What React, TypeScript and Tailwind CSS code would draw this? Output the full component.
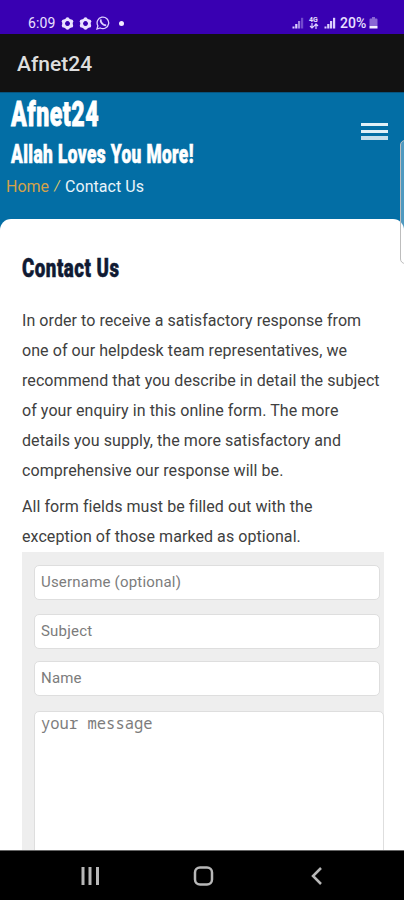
import type { ReactNode } from "react";

const INTRO_LINES = [
  "In order to receive a satisfactory response from",
  "one of our helpdesk team representatives, we",
  "recommend that you describe in detail the subject",
  "of your enquiry in this online form. The more",
  "details you supply, the more satisfactory and",
  "comprehensive our response will be.",
];

const NOTE_LINES = [
  "All form fields must be filled out with the",
  "exception of those marked as optional.",
];

function Flower() {
  return (
    <svg width="13" height="13" viewBox="0 0 13 13" className="shrink-0">
      <circle cx="6.5" cy="6.5" r="3.9" fill="none" stroke="#e9e0ff" strokeWidth="2.8" />
      <g fill="#e9e0ff">
        <circle cx="6.5" cy="2.200" r="1.9" />
        <circle cx="10.3" cy="4.3" r="1.9" />
        <circle cx="10.3" cy="8.7" r="1.9" />
        <circle cx="6.5" cy="10.8" r="1.9" />
        <circle cx="2.7" cy="8.7" r="1.9" />
        <circle cx="2.7" cy="4.3" r="1.9" />
      </g>
    </svg>
  );
}

function WhatsApp() {
  return (
    <svg width="14" height="14" viewBox="0 0 14 14" fill="none" stroke="#ddd0ff" className="shrink-0">
      <path d="M1 13l.9-3.2A5.8 5.8 0 1 1 4.2 12z" strokeWidth="1.3" />
      <path d="M4.8 4.2c-.8 1.6 2.4 5.2 4.6 5" strokeWidth="1.9" strokeLinecap="round" />
    </svg>
  );
}

function Signal({ weak = false }: { weak?: boolean }) {
  return (
    <svg width="12" height="12" viewBox="0 0 12 12" fill="#ddd0ff" className="shrink-0">
      <rect x="0.5" y="9.5" width="2" height="2" />
      <rect x="3.2" y="7" width="2.2" height="4.5" />
      <rect x="6" y="4" width="2.2" height="7.5" opacity={weak ? 0.65 : 1} />
      <rect x="9" y="0.8" width="2.2" height="10.7" opacity={weak ? 0.35 : 1} />
    </svg>
  );
}

function StatusBar() {
  return (
    <div className="flex h-[34px] shrink-0 items-center bg-[#3900b2] pt-[12px] pl-[28px] text-[14px] text-[#e9e0ff]">
      <span className="w-[33px] tracking-[0.1px]">6:09</span>
      <div className="flex items-center gap-[4.5px]">
        <Flower />
        <Flower />
        <WhatsApp />
      </div>
      <span className="ml-[9px] size-[5px] rounded-full bg-[#f3edff]" />
      <div className="ml-auto flex items-center pr-[26px]">
        <Signal weak />
        <div className="ml-[4px] flex w-[11px] flex-col items-center">
          <span className="text-[7px] leading-[6px] font-bold">4G</span>
          <svg width="10" height="6" viewBox="0 0 10 6" stroke="#ddd0ff" strokeWidth="1.2" fill="none">
            <path d="M3 0v5M1 3l2 2 2-2M7 6V1M5.3 3l1.700-2 2 2" />
          </svg>
        </div>
        <div className="ml-[5px]">
          <Signal />
        </div>
        <span className="ml-[4px] w-[29px] font-medium">20%</span>
        <svg width="9" height="12" viewBox="0 0 9 12">
          <path d="M3 0h3v1.500h1.500q1 0 1 1V9H.5V2.500q0-1 1-1H3z" fill="#8a66d4" />
          <rect x="0.5" y="9" width="8" height="2.500" fill="#f3edff" />
        </svg>
      </div>
    </div>
  );
}

function Field({ placeholder, className = "" }: { placeholder: string; className?: string }) {
  return (
    <input
      placeholder={placeholder}
      className={`block h-[35px] w-[346px] rounded-[5px] border border-[#dedede] bg-white px-[6px] pb-[2px] text-[15px] tracking-[0.2px] text-[#333] outline-none placeholder:text-[#7c7c7c] ${className}`}
    />
  );
}

// Tall narrow headings, squeezed horizontally from the heaviest weight
function Condensed({ children, className }: { children: ReactNode; className: string }) {
  return (
    <span className={`block w-max origin-left font-black whitespace-nowrap ${className}`}>{children}</span>
  );
}

function Lines({ lines, className }: { lines: string[]; className: string }) {
  return (
    <p className={`text-[16px] leading-[30px] tracking-[0.07px] whitespace-nowrap text-[#404040] ${className}`}>
      {lines.map((line) => (
        <span key={line} className="block">
          {line}
        </span>
      ))}
    </p>
  );
}

export default function App() {
  return (
    <div className="flex h-[900px] w-[404px] flex-col overflow-hidden bg-white font-['Roboto',sans-serif]">
      <StatusBar />
      <div className="flex h-[58px] shrink-0 items-center bg-[#121212] pt-[3px] pl-[17px] text-[21px] font-medium text-[#dedede]">
        Afnet24
      </div>

      <div className="relative flex min-h-0 flex-1 flex-col bg-[#036ea5]">
        <header className="h-[127px] shrink-0 border-t border-[#07547e]">
          <div className="flex justify-between pr-[16px] pl-[11px]">
            <div>
              <h1>
                <Condensed className="h-[42px] scale-x-[0.66] text-[35px] leading-[43px] tracking-[0.8px] text-white [-webkit-text-stroke:0.8px_#fff]">
                  Afnet24
                </Condensed>
              </h1>
              <h2>
                <Condensed className="h-[38px] scale-x-[0.665] text-[26px] leading-[39px] tracking-[0.6px] text-white [-webkit-text-stroke:0.6px_#fff]">
                  Allah Loves You More!
                </Condensed>
              </h2>
            </div>
            <button className="mt-[30px] flex h-[17px] w-[27px] flex-col justify-between" aria-label="Menu">
              <span className="h-[3px] w-full bg-[#e1f0f7]" />
              <span className="h-[3px] w-full bg-[#e1f0f7]" />
              <span className="h-[4px] w-full bg-[#c7dfec]" />
            </button>
          </div>
          <nav className="flex gap-[4px] pl-[6px] text-[16px] leading-[27px]">
            <span className="w-[43px] text-[#d3a24a]">Home</span>
            <span className="w-[8px] text-center text-[14px] text-[#dcc86a] italic">/</span>
            <span className="tracking-[0.05px] text-[#e9f4fa]">Contact Us</span>
          </nav>
        </header>

        <main className="min-h-0 flex-1 overflow-hidden rounded-t-[11px] bg-white pl-[22px]">
          <h3 className="pt-[30px]">
            <Condensed className="h-[38px] scale-x-[0.72] text-[26px] leading-[38px] tracking-[0.7px] text-[#101a33] [-webkit-text-stroke:0.5px_#101a33]">
              Contact Us
            </Condensed>
          </h3>
          <Lines lines={INTRO_LINES} className="mt-[19px]" />
          <Lines lines={NOTE_LINES} className="mt-[6px]" />
          <form className="h-[310px] w-[362px] bg-[#eeeeee] pt-[13px] pl-[12px]">
            <Field placeholder="Username (optional)" />
            <Field placeholder="Subject" className="mt-[14px]" />
            <Field placeholder="Name" className="mt-[12px]" />
            <textarea
              placeholder="your message"
              className="mt-[15px] block h-[200px] w-[350px] resize-none rounded-[5px] border border-[#dedede] bg-white px-[6px] py-px font-['Noto_Sans_Mono','DejaVu_Sans_Mono',monospace] text-[15.500px] leading-[20px] outline-none placeholder:text-[#7c7c7c]"
            />
          </form>
        </main>

        {/* Edge panel handle */}
        <div className="absolute top-[48px] right-[-6px] h-[124px] w-[10px] rounded-[5px] border border-[#bdbdbd] bg-white/30" />
      </div>

      <footer className="flex h-[50px] shrink-0 items-center border-t border-[#666] bg-black pt-px">
        <svg width="404" height="30" viewBox="0 0 404 30" fill="none" stroke="#b8b8b8" strokeWidth="2.500">
          <path d="M83 6v18M90 6v18M97.500 6v18" strokeWidth="3" />
          <rect x="195" y="6.500" width="17" height="17" rx="5" />
          <path d="M321 7l-8 8 8 8" />
        </svg>
      </footer>
    </div>
  );
}
